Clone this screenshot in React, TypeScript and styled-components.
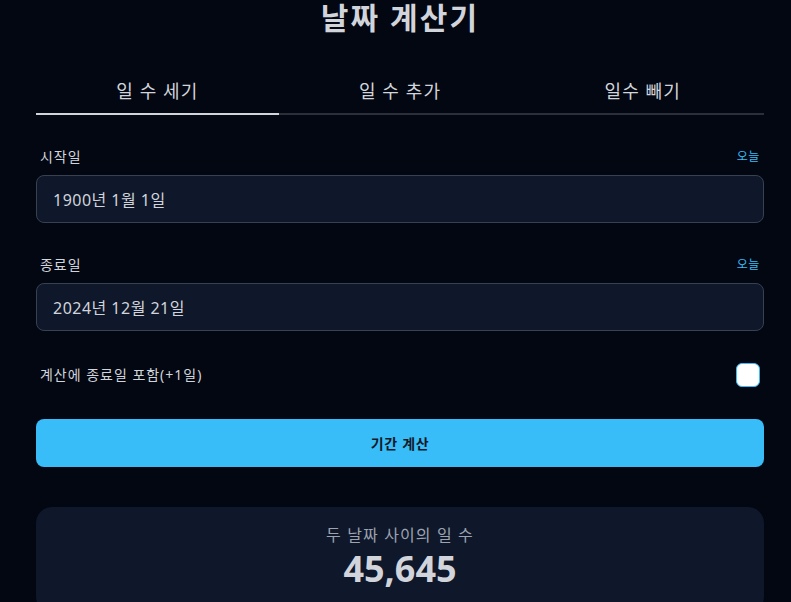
import { useState } from "react";
import styled, { createGlobalStyle } from "styled-components";

const GlobalStyle = createGlobalStyle`
  html, body {
    margin: 0;
    padding: 0;
    background-color: #030712;
  }

  body {
    font-family: "Noto Sans", "Noto Sans CJK KR", sans-serif;
    color: #d1d5db;
  }
`;

const tabs = ["일 수 세기", "일 수 추가", "일수 빼기"];

export default function App() {
  const [activeTab, setActiveTab] = useState(0);
  const [includeEnd, setIncludeEnd] = useState(false);

  return (
    <>
      <GlobalStyle />
      <Page>
        <Title>날짜 계산기</Title>

        <TabBar>
          {tabs.map((tab, i) => (
            <Tab key={tab} $active={i === activeTab} onClick={() => setActiveTab(i)}>
              {tab}
            </Tab>
          ))}
        </TabBar>

        <Form>
          <Field>
            <LabelRow>
              <Label>시작일</Label>
              <TodayButton>오늘</TodayButton>
            </LabelRow>
            <DateInput>1900년 1월 1일</DateInput>
          </Field>

          <Field>
            <LabelRow>
              <Label>종료일</Label>
              <TodayButton>오늘</TodayButton>
            </LabelRow>
            <DateInput>2024년 12월 21일</DateInput>
          </Field>

          <CheckRow>
            <Label>계산에 종료일 포함(+1일)</Label>
            <Checkbox
              type="checkbox"
              checked={includeEnd}
              onChange={(e) => setIncludeEnd(e.target.checked)}
            />
          </CheckRow>

          <SubmitButton>기간 계산</SubmitButton>
        </Form>

        <ResultCard>
          <ResultLabel>두 날짜 사이의 일 수</ResultLabel>
          <ResultValue>45,645</ResultValue>
        </ResultCard>
      </Page>
    </>
  );
}

const Page = styled.div`
  display: flex;
  flex-direction: column;

  width: 728px;
  margin-left: 36px;
`;

const Title = styled.h1`
  margin: 0;

  font-size: 30px;
  font-weight: 700;
  line-height: 36px;
  letter-spacing: 0.07em;
  text-align: center;

  color: #d1d5db;
`;

const TabBar = styled.div`
  display: grid;
  grid-template-columns: repeat(3, 1fr);

  margin-top: 33px;
`;

const Tab = styled.button<{ $active: boolean }>`
  padding: 8px 0;

  font-family: inherit;
  font-size: 18px;
  line-height: 28px;
  letter-spacing: 0.06em;

  color: #d1d5db;
  background: none;
  border: none;
  border-bottom: 2px solid ${({ $active }) => ($active ? "#d1d5db" : "#2b2f38")};

  cursor: pointer;
`;

const Form = styled.div`
  display: flex;
  flex-direction: column;
  gap: 32px;

  margin-top: 32px;
`;

const Field = styled.div`
  display: flex;
  flex-direction: column;
  gap: 8px;
`;

const LabelRow = styled.div`
  display: flex;
  justify-content: space-between;
  align-items: center;

  padding: 0 4px;
`;

const Label = styled.span`
  font-size: 14px;
  line-height: 20px;
  letter-spacing: 0.07em;

  color: #d1d5db;
`;

const TodayButton = styled.span`
  font-size: 12px;
  line-height: 16px;
  letter-spacing: 0.05em;

  color: #38bdf8;
  cursor: pointer;
`;

const DateInput = styled.div`
  display: flex;
  align-items: center;

  box-sizing: border-box;
  height: 48px;
  padding: 0 16px;

  font-size: 16px;
  letter-spacing: 0.03em;

  color: #d1d5db;
  background-color: #0f172a;
  border: 1px solid #374151;
  border-radius: 8px;
`;

const CheckRow = styled.label`
  display: flex;
  justify-content: space-between;
  align-items: center;

  height: 24px;
  padding: 0 4px;
`;

const Checkbox = styled.input`
  appearance: none;

  width: 24px;
  height: 24px;
  margin: 0;

  background-color: #ffffff;
  border: 1px solid #38bdf8;
  border-radius: 6px;

  cursor: pointer;
`;

const SubmitButton = styled.button`
  height: 48px;

  font-family: inherit;
  font-size: 14px;
  font-weight: 700;
  letter-spacing: 0.05em;

  color: #111827;
  background-color: #38bdf8;
  border: none;
  border-radius: 8px;

  cursor: pointer;
`;

const ResultCard = styled.div`
  display: flex;
  flex-direction: column;
  align-items: center;

  margin-top: 40px;
  padding: 16px 0 24px;

  background-color: #0f172a;
  border-radius: 16px;
`;

const ResultLabel = styled.div`
  font-size: 16px;
  line-height: 24px;
  letter-spacing: 0.07em;

  color: #9ca3af;
`;

const ResultValue = styled.div`
  margin-top: 2px;

  font-size: 36px;
  font-weight: 700;
  line-height: 40px;

  color: #d1d5db;
`;
